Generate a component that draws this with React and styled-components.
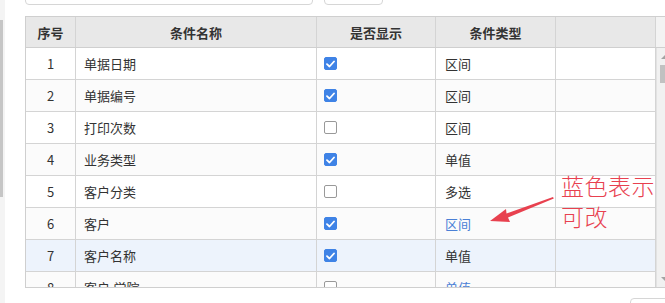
import React from "react";
import styled, { createGlobalStyle } from "styled-components";

const Global = createGlobalStyle`
  html, body { margin: 0; padding: 0; background: #fff; overflow: hidden; }
  body { width: 665px; height: 303px; font-family: "Noto Sans CJK SC", "Noto Sans", sans-serif; color: #333; }
`;

const Page = styled.div`
  display: flex;
  align-items: flex-start;
  height: 303px;
  width: 665px;
  overflow: hidden;
`;

const Rail = styled.div`
  width: 5px;
  height: 303px;
  flex: none;
  background: #f4f4f4;
  display: flex;
  flex-direction: column;
  padding-top: 20px;
  box-sizing: border-box;
`;

const RailThumb = styled.div`
  width: 3px;
  height: 177px;
  background: #c6c6c6;
`;

const Main = styled.div`
  flex: none;
  width: 648px;
  margin-left: 20px;
  display: flex;
  flex-direction: column;
  position: relative;
  & > * { flex: none; }
`;

const Toolbar = styled.div`
  height: 5px;
  display: flex;
  align-items: flex-end;
  gap: 11px;
  overflow: hidden;
`;

const Input = styled.div`
  flex: none;
  width: ${(p) => p.w}px;
  height: 28px;
  border: 1px solid #d6d6d6;
  border-radius: 4px;
  box-sizing: border-box;
`;

const Frame = styled.div`
  margin-top: 11px;
  border: 1px solid #cfcfcf;
  border-right: none;
  display: flex;
  flex-direction: column;
`;

const HeadRow = styled.div`
  display: flex;
  height: 30px;
  flex: none;
  border-bottom: 1px solid #cfcfcf;
  background: #e8e8e8;
`;

const Grid = styled.div`
  display: grid;
  grid-template-columns: 50px 241px 119px 120px 100px;
`;

const HeadCell = styled.div`
  border-right: 1px solid #d4d4d4;
  display: flex;
  align-items: center;
  justify-content: center;
  font-size: 13px;
  font-weight: 700;
  color: #333;
  height: 30px;
`;

const Gutter = styled.div`
  flex: none;
  width: 17px;
  background: #f3f3f3;
`;

const Body = styled.div`
  display: flex;
  flex: none;
  height: 239px;
  overflow: hidden;
`;

const Rows = styled.div`
  display: flex;
  flex-direction: column;
`;

const Row = styled(Grid)`
  height: 32px;
  flex: none;
  background: ${(p) => (p.sel ? "#edf3fc" : p.alt ? "#fbfbfb" : "#fff")};
`;

const Cell = styled.div`
  border-right: 1px solid #d4d4d4;
  border-bottom: 1px solid #d4d4d4;
  display: flex;
  align-items: center;
  justify-content: ${(p) => (p.center ? "center" : "flex-start")};
  padding-left: ${(p) => (p.center ? 0 : p.pad ?? 8)}px;
  font-size: 13px;
  color: ${(p) => (p.link ? "#4a80d6" : "#333")};
`;

const Box = styled.span`
  width: 13px;
  height: 13px;
  box-sizing: border-box;
  border-radius: 2px;
  display: flex;
  align-items: center;
  justify-content: center;
  background: ${(p) => (p.on ? "#3f83e6" : "#fff")};
  border: 1px solid ${(p) => (p.on ? "#3f83e6" : "#999")};
`;

const ScrollTrack = styled.div`
  flex: none;
  width: 17px;
  background: #f1f1f1;
  border-left: 1px solid #e2e2e2;
  box-sizing: border-box;
  display: flex;
  flex-direction: column;
  align-items: center;
`;

const ArrowBtn = styled.div`
  height: 17px;
  flex: none;
  display: flex;
  align-items: center;
  justify-content: center;
  ${(p) => (p.down ? "margin-top: auto;" : "")}
  &::before {
    content: "";
    border-left: 4px solid transparent;
    border-right: 4px solid transparent;
    ${(p) => (p.down ? "border-top: 4px solid #a3a3a3;" : "border-bottom: 4px solid #a3a3a3;")}
  }
`;

const Thumb = styled.div`
  width: 10px;
  height: 18px;
  background: #c1c1c1;
`;

const Footer = styled.div`
  display: flex;
  justify-content: flex-end;
  padding-top: 10px;
  margin-right: -17px;
`;

const Button = styled.div`
  width: 60px;
  height: 28px;
  border: 1px solid #d6d6d6;
  border-radius: 4px;
  box-sizing: border-box;
`;

const Note = styled.div`
  position: absolute;
  left: 536px;
  top: 170px;
  font-size: 23px;
  line-height: 31px;
  color: #e8414f;
  font-family: "Noto Sans CJK SC", sans-serif;
  font-weight: 300;
  letter-spacing: 0.5px;
`;

const ArrowSvg = styled.svg`
  position: absolute;
  left: 435px;
  top: 190px;
`;

const Check = () => (
  <svg width="9" height="8" viewBox="0 0 9 8">
    <path d="M1 4.2 L3.5 6.5 L8 1.5" stroke="#fff" strokeWidth="1.8" fill="none" strokeLinecap="round" strokeLinejoin="round" />
  </svg>
);

const data = [
  [1, "单据日期", true, "区间"],
  [2, "单据编号", true, "区间"],
  [3, "打印次数", false, "区间"],
  [4, "业务类型", true, "单值"],
  [5, "客户分类", false, "多选"],
  [6, "客户", true, "区间", true],
  [7, "客户名称", true, "单值", false, true],
  [8, "客户.学院", false, "单值", true],
];

export default function App() {
  return (
    <>
      <Global />
      <Page>
        <Rail>
          <RailThumb />
        </Rail>
        <Main>
          <Toolbar>
            <Input w={288} />
            <Input w={59} />
          </Toolbar>
          <Frame>
            <HeadRow>
              <Grid>
                <HeadCell>序号</HeadCell>
                <HeadCell>条件名称</HeadCell>
                <HeadCell>是否显示</HeadCell>
                <HeadCell>条件类型</HeadCell>
                <HeadCell />
              </Grid>
              <Gutter />
            </HeadRow>
            <Body>
              <Rows>
                {data.map(([n, name, on, type, link, sel]) => (
                  <Row key={n} alt={n % 2 === 0} sel={sel}>
                    <Cell center>{n}</Cell>
                    <Cell>{name}</Cell>
                    <Cell pad={7}>
                      <Box on={on}>{on && <Check />}</Box>
                    </Cell>
                    <Cell pad={9} link={link}>{type}</Cell>
                    <Cell />
                  </Row>
                ))}
              </Rows>
              <ScrollTrack>
                <ArrowBtn />
                <Thumb />
                <ArrowBtn down />
              </ScrollTrack>
            </Body>
          </Frame>
          <Footer>
            <Button />
          </Footer>
          <Note>
            蓝色表示
            <br />
            可改
          </Note>
          <ArrowSvg width="100" height="40" viewBox="0 0 100 40">
            <path d="M30 31 L46 19 L46.5 23.5 L93 7 L93.8 8.6 L48 27.5 L50 32 Z" fill="#e8414f" />
          </ArrowSvg>
        </Main>
      </Page>
    </>
  );
}
